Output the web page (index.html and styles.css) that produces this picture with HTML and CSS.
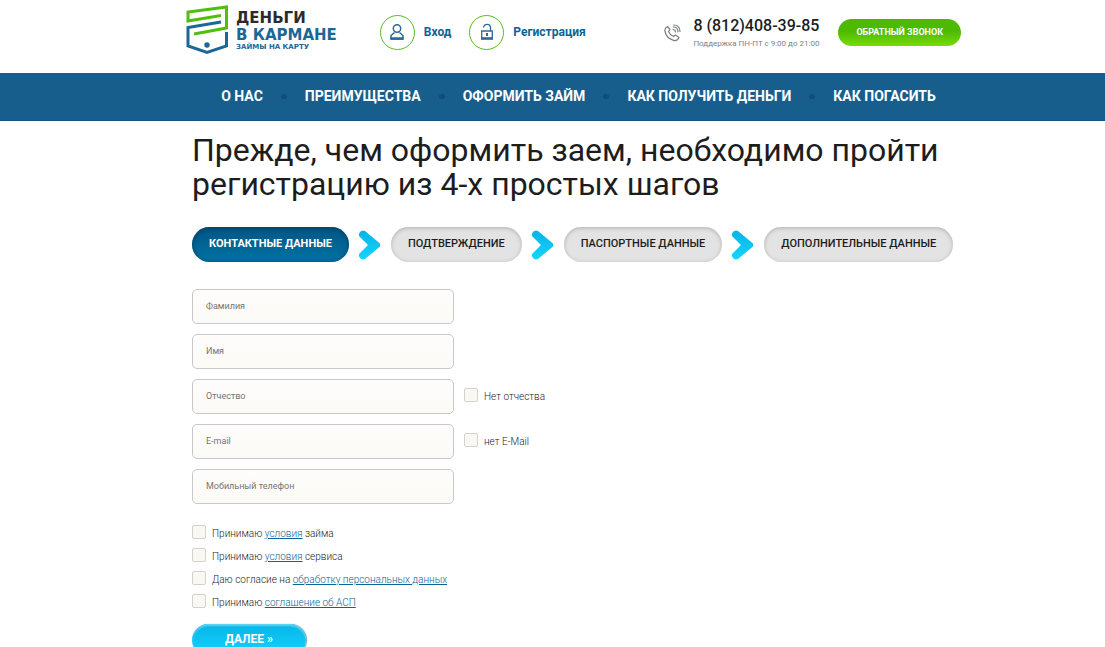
FILE: index.html
```html
<!DOCTYPE html>
<html lang="ru">
<head>
<meta charset="utf-8">
<meta name="viewport" content="width=device-width, initial-scale=1">
<title>Деньги в кармане — регистрация</title>
<link rel="stylesheet" href="styles.css">
</head>
<body>
<header class="header wrap">
  <a class="logo" href="#">
    <svg class="logo-mark" width="42" height="50" viewBox="0 0 42 50" fill="none" stroke-width="3">
      <path d="M35 10.500L2 16V7L40.500 2V23L8 29" stroke="#4fbf0a"/>
      <path d="M35 17L2 22.500V41L21 47.500L40.500 41V27" stroke="#1b6797"/>
      <circle cx="21" cy="40" r="2.700" fill="#1b6797"/>
    </svg>
    <span class="logo-text">
      <span class="logo-top">ДЕНЬГИ</span>
      <span class="logo-bottom">В КАРМАНЕ</span>
      <span class="logo-tag">ЗАЙМЫ НА КАРТУ</span>
    </span>
  </a>
  <nav class="account">
    <a class="account-link" href="#">
      <span class="account-icon">
        <svg width="16" height="18" viewBox="0 0 16 18" fill="none" stroke="#2f6893" stroke-width="1.500">
          <circle cx="8" cy="5.500" r="3.700"/>
          <path d="M5.500 9.500L2 12.500V16H14V12.500L10.500 9.500"/>
          <path d="M1.500 15.500H14.500" stroke-width="2.500"/>
        </svg>
      </span>
      Вход
    </a>
    <a class="account-link" href="#">
      <span class="account-icon">
        <svg width="14" height="18" viewBox="0 0 14 18" fill="none" stroke="#2f6893" stroke-width="1.300">
          <path d="M3.500 4.500C4 .2 10.500.2 10.500 4.500V8"/>
          <path d="M1.700 8H12.300V15.500H1.700Z"/>
          <path d="M1 15.500H13" stroke-width="2.500"/>
          <path d="M7 10V13" stroke-width="2"/>
        </svg>
      </span>
      Регистрация
    </a>
  </nav>
  <div class="contact">
    <svg width="17" height="18" viewBox="0 0 17 18" fill="none" stroke="#7b828a" stroke-width="1.200" stroke-linejoin="round" stroke-linecap="round">
      <path d="M3.500 2.500L6 5.500L4.500 7.500C5.500 10 7 11.500 9.500 12.500L11.500 11L15 13.500C14 16 12 17 9.500 16.300C5 15 2 12 1 7.500C.5 5 1.500 3.500 3.500 2.500Z"/>
      <path d="M9 5.500C10.500 5.500 11.500 6.500 11.500 8M9.200 3C12 3 14 5 14 7.800M9.500 1C13.500 1 16 3.500 16 7.500"/>
    </svg>
    <div>
      <div class="phone">8 (812)408-39-85</div>
      <div class="hours">Поддержка ПН-ПТ с 9:00 до 21:00</div>
    </div>
    <button class="callback" type="button">ОБРАТНЫЙ ЗВОНОК</button>
  </div>
</header>

<nav class="menu">
  <ul class="menu-list wrap">
    <li><a href="#">О НАС</a></li>
    <li><a href="#">ПРЕИМУЩЕСТВА</a></li>
    <li><a href="#">ОФОРМИТЬ ЗАЙМ</a></li>
    <li><a href="#">КАК ПОЛУЧИТЬ ДЕНЬГИ</a></li>
    <li><a href="#">КАК ПОГАСИТЬ</a></li>
  </ul>
</nav>

<main class="content wrap">
  <h1>Прежде, чем оформить заем, необходимо пройти регистрацию из 4-х простых шагов</h1>
  <div class="steps">
    <span class="step step-active">КОНТАКТНЫЕ ДАННЫЕ</span>
    <svg class="arrow" width="21" height="30" viewBox="0 0 21 30"><defs><linearGradient id="sky" x1="0" y1="0" x2="0" y2="1"><stop offset="0" stop-color="#06b4e6"/><stop offset="1" stop-color="#15d4ff"/></linearGradient></defs><path d="M0 3.500Q2 -.5 6 1L21 13.500V16.500L6 29Q2 30.500 0 26.500V24L9 15L0 6Z" fill="url(#sky)"/></svg>
    <span class="step">ПОДТВЕРЖДЕНИЕ</span>
    <svg class="arrow" width="21" height="30" viewBox="0 0 21 30"><path d="M0 3.500Q2 -.5 6 1L21 13.500V16.500L6 29Q2 30.500 0 26.500V24L9 15L0 6Z" fill="url(#sky)"/></svg>
    <span class="step">ПАСПОРТНЫЕ ДАННЫЕ</span>
    <svg class="arrow" width="21" height="30" viewBox="0 0 21 30"><path d="M0 3.500Q2 -.5 6 1L21 13.500V16.500L6 29Q2 30.500 0 26.500V24L9 15L0 6Z" fill="url(#sky)"/></svg>
    <span class="step">ДОПОЛНИТЕЛЬНЫЕ ДАННЫЕ</span>
  </div>
  <form class="form">
    <div class="row"><input class="field" type="text" placeholder="Фамилия" aria-label="Фамилия"></div>
    <div class="row"><input class="field" type="text" placeholder="Имя" aria-label="Имя"></div>
    <div class="row"><input class="field" type="text" placeholder="Отчество" aria-label="Отчество">
      <div class="check"><input type="checkbox" id="no-patronymic"><label for="no-patronymic">Нет отчества</label></div></div>
    <div class="row"><input class="field" type="email" placeholder="E-mail" aria-label="E-mail">
      <div class="check"><input type="checkbox" id="no-email"><label for="no-email">нет E-Mail</label></div></div>
    <div class="row"><input class="field" type="tel" placeholder="Мобильный телефон" aria-label="Мобильный телефон"></div>
    <div class="terms">
      <div class="check"><input type="checkbox" id="loan"><label for="loan">Принимаю <a href="#">условия</a> займа</label></div>
      <div class="check"><input type="checkbox" id="service"><label for="service">Принимаю <a href="#">условия</a> сервиса</label></div>
      <div class="check"><input type="checkbox" id="personal"><label for="personal">Даю согласие на <a href="#">обработку персональных данных</a></label></div>
      <div class="check"><input type="checkbox" id="asp"><label for="asp">Принимаю <a href="#">соглашение об АСП</a></label></div>
    </div>
    <button class="next" type="submit">ДАЛЕЕ »</button>
  </form>
</main>
</body>
</html>
```
FILE: styles.css
```css
* { box-sizing: border-box; }
body { margin: 0; background: #fff; color: #1d1d1d; font-family: Roboto, "Liberation Sans", sans-serif; }
a { color: #0a6496; }
button { border: 0; cursor: pointer; font-family: inherit; color: #fff; }

.wrap { max-width: 817px; margin: 0 auto; }

.header { display: flex; align-items: center; padding: 5px 0 18px 42px; }
.logo { display: flex; gap: 8px; text-decoration: none; }
.logo-text { display: flex; flex-direction: column; padding-top: 4px; font-family: "DejaVu Sans", sans-serif; font-weight: 700; color: #1b6797; }
.logo-top { font-size: 15px; line-height: 18px; color: #2b2b2e; }
.logo-bottom { font-size: 15px; line-height: 16px; }
.logo-tag { font-size: 7px; line-height: 8px; }
.account { display: flex; gap: 18px; margin-left: 43px; padding-top: 4px; }
.account-link { display: flex; align-items: center; gap: 9px; font-size: 12px; font-weight: 700; text-decoration: none; }
.account-icon { display: flex; align-items: center; justify-content: center; width: 35px; height: 35px; border: 1px solid #57bd1b; border-radius: 50%; }
.contact { display: flex; align-items: center; gap: 12px; margin-left: auto; padding-top: 5px; white-space: nowrap; }
.phone { font-size: 16px; font-weight: 500; line-height: 20px; padding-top: 1px; }
.hours { font-size: 8px; line-height: 12px; color: #7b828a; padding-top: 2px; }
.callback { height: 27px; margin-left: 7px; padding: 0 18px 1px; border-radius: 14px; background: linear-gradient(#4dba00 45%, #77dc0b); font-size: 9px; font-weight: 700; }

.menu { background: #185e8c; border-bottom: 1px solid #0e5482; }
.menu-list { display: flex; justify-content: center; padding: 0 0 0 52px; list-style: none; }
.menu li { display: flex; align-items: center; font-size: 14px; font-weight: 700; line-height: 47px; }
.menu li + li::before { content: ""; width: 6px; height: 5px; margin: 0 18px; border-radius: 3px; background: #124d76; }
.menu a { color: #fff; text-decoration: none; }

.content { padding: 12px 0 24px 48px; }
h1 { margin: 0; font-size: 32px; font-weight: 400; line-height: 34px; }
.steps { display: flex; align-items: center; margin-top: 26px; }
.step { padding: 0 17px 2px; border-radius: 18px; background: #e3e3e3; box-shadow: inset 0 1px 4px #b0b0b0; font-size: 11px; font-weight: 500; line-height: 33px; white-space: nowrap; }
.step-active { background: linear-gradient(#005585, #0073a3); box-shadow: inset 0 1px 5px #04405c; color: #fff; font-weight: 700; }
.arrow { flex-shrink: 0; margin: 0 11px 0 10px; }

.form { margin-top: 27px; }
.row { display: flex; align-items: center; gap: 10px; margin-bottom: 10px; }
.field { width: 262px; height: 35px; padding: 0 13px 2px; border: 1px solid #c6c8ca; border-radius: 5px; background: linear-gradient(#fefdfb, #fbfaf7); font-family: inherit; font-size: 9px; }
.field::placeholder { color: #757575; }
.check { display: flex; align-items: flex-start; gap: 6px; font-size: 10px; font-weight: 300; line-height: 16px; color: #1d1d1d; }
.check input { appearance: none; width: 14px; height: 14px; margin: 0; border: 1px solid #d6d2ca; border-radius: 2px; background: #f9f8f5; }
.check input:checked { background: #1b6797; }
.check label { padding-top: 1px; }
.terms { display: grid; gap: 6px; padding-top: 11px; }
.next { height: 32px; width: 114px; margin-top: 13px; padding: 0 0 2px; border-radius: 16px; background: linear-gradient(#06b4e6, #15d4ff); box-shadow: inset 0 2px 2px #61d5f3, 1px 0 1px #6b9cad; font-size: 12px; font-weight: 700; }
```
